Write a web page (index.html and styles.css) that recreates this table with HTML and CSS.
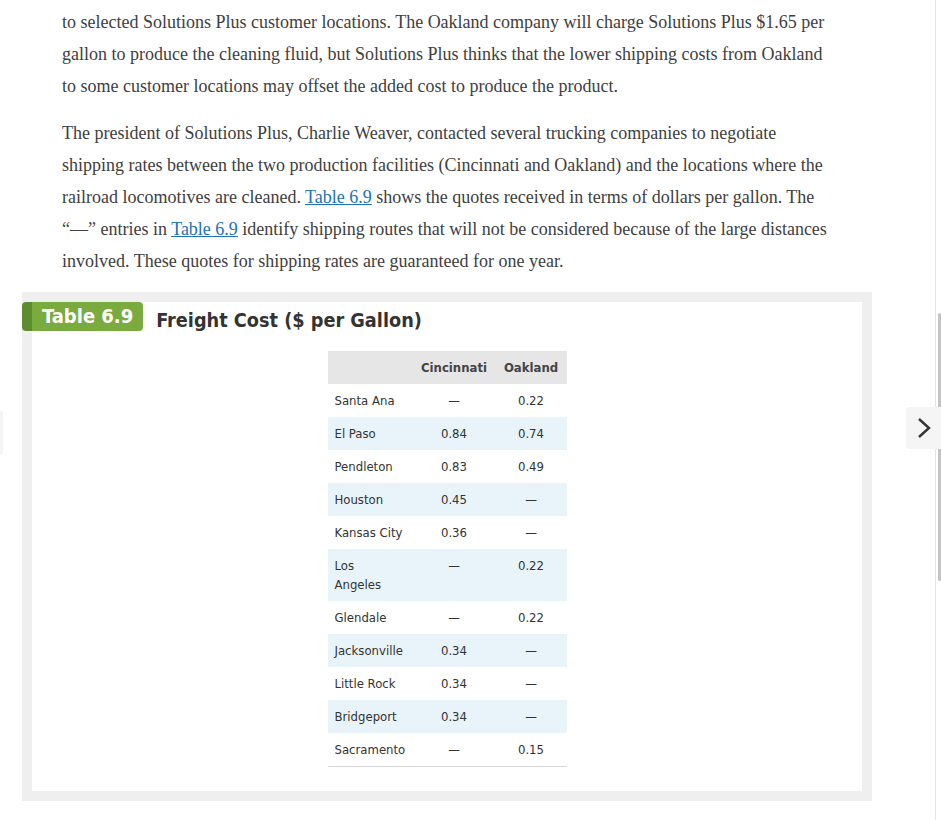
FILE: index.html
```html
<!DOCTYPE html>
<html lang="en">
<head>
<meta charset="utf-8">
<title>Freight Cost</title>
<link rel="stylesheet" href="styles.css">
</head>
<body>
<div class="page">
  <p class="para">to selected Solutions Plus customer locations. The Oakland company will charge Solutions Plus $1.65 per gallon to produce the cleaning fluid, but Solutions Plus thinks that the lower shipping costs from Oakland to some customer locations may offset the added cost to produce the product.</p>
  <p class="para">The president of Solutions Plus, Charlie Weaver, contacted several trucking companies to negotiate shipping rates between the two production facilities (Cincinnati and Oakland) and the locations where the railroad locomotives are cleaned. <a class="link" href="#t69">Table 6.9</a> shows the quotes received in terms of dollars per gallon. The “—” entries in <a class="link" href="#t69">Table 6.9</a> identify shipping routes that will not be considered because of the large distances involved. These quotes for shipping rates are guaranteed for one year.</p>
  <div class="figure" id="t69">
    <div class="fig-head">
      <span class="badge">Table 6.9</span>
      <span class="fig-title">Freight Cost ($ per Gallon)</span>
    </div>
    <table class="data">
      <colgroup><col class="c1"><col class="c2"><col class="c3"></colgroup>
      <thead>
        <tr><th></th><th>Cincinnati</th><th>Oakland</th></tr>
      </thead>
      <tbody>
        <tr><td>Santa Ana</td><td>—</td><td>0.22</td></tr>
        <tr class="alt"><td>El Paso</td><td>0.84</td><td>0.74</td></tr>
        <tr><td>Pendleton</td><td>0.83</td><td>0.49</td></tr>
        <tr class="alt"><td>Houston</td><td>0.45</td><td>—</td></tr>
        <tr><td>Kansas City</td><td>0.36</td><td>—</td></tr>
        <tr class="alt"><td>Los<br>Angeles</td><td>—</td><td>0.22</td></tr>
        <tr><td>Glendale</td><td>—</td><td>0.22</td></tr>
        <tr class="alt"><td>Jacksonville</td><td>0.34</td><td>—</td></tr>
        <tr><td>Little Rock</td><td>0.34</td><td>—</td></tr>
        <tr class="alt"><td>Bridgeport</td><td>0.34</td><td>—</td></tr>
        <tr class="last"><td>Sacramento</td><td>—</td><td>0.15</td></tr>
      </tbody>
    </table>
  </div>
</div>
<div class="rail">
  <div class="thumb"></div>
</div>
<a class="nav prev" href="#" aria-label="Previous"></a>
<a class="nav next" href="#" aria-label="Next">
  <svg width="16" height="22" viewBox="0 0 16 22"><path d="M3 2 L13 11 L3 20" fill="none" stroke="#333" stroke-width="2.4" stroke-linecap="butt"/></svg>
</a>
</body>
</html>
```
FILE: styles.css
```css
html, body {
  margin: 0;
  padding: 0;
  background: #fff;
}
.page {
  width: 850px;
  margin-left: 22px;
  padding-top: 6px;
}
.para {
  margin: 0 36px 15px 40px;
  font-family: "Liberation Serif", "Times New Roman", serif;
  font-size: 18px;
  line-height: 32px;
  color: #404040;
}
.link {
  color: #1b72b5;
  text-decoration: underline;
}
.figure {
  border: 10px solid #efefef;
  background: #fff;
  padding: 0 0 24px;
}
.fig-head {
  display: flex;
  align-items: flex-start;
  gap: 13px;
  margin-left: -10px;
}
.badge {
  display: block;
  height: 29px;
  box-sizing: border-box;
  padding: 0 10px 0 20px;
  background: linear-gradient(to right, #5e8d31 0, #5e8d31 10px, #79ab3f 10px);
  border-radius: 4px;
  color: #fff;
  font-family: "DejaVu Sans Condensed", "DejaVu Sans", sans-serif;
  font-weight: bold;
  font-size: 20px;
  line-height: 29px;
}
.fig-title {
  font-family: "DejaVu Sans Condensed", "DejaVu Sans", sans-serif;
  font-weight: bold;
  font-size: 19.7px;
  line-height: 26px;
  padding-top: 6px;
  color: #333;
}
.data {
  margin: 17px auto 0;
  border-collapse: collapse;
  font-family: "DejaVu Sans Condensed", "DejaVu Sans", sans-serif;
  font-size: 13px;
  line-height: 19px;
  color: #333;
  table-layout: fixed;
  width: 239px;
}
.c1 { width: 85px; }
.c2 { width: 83px; }
.c3 { width: 71px; }
.data th {
  background: #e6e6e6;
  font-weight: bold;
  padding: 7px 7px;
  text-align: center;
  color: #444;
}
.data td {
  padding: 7px 7px;
  text-align: center;
  vertical-align: top;
}
.data td:first-child {
  text-align: left;
}
.data tr.alt td {
  background: #e8f4f9;
}
.data tr.last td {
  border-bottom: 1px solid #d6d6d6;
}
.rail {
  position: fixed;
  top: 0;
  right: 0;
  width: 5px;
  height: 100%;
  border-left: 1px solid #e4e4e4;
  background: #fff;
}
.thumb {
  position: absolute;
  top: 313px;
  right: 0;
  width: 3px;
  height: 268px;
  background: #c4c4c4;
  border-radius: 2px;
}
.nav {
  position: fixed;
  display: flex;
  align-items: center;
  justify-content: center;
  background: #f5f5f5;
}
.prev {
  left: 0;
  top: 411px;
  width: 3px;
  height: 44px;
  border-radius: 0 3px 3px 0;
}
.next {
  right: 0;
  top: 407px;
  width: 35px;
  height: 42px;
  border-radius: 3px 0 0 3px;
}
```
